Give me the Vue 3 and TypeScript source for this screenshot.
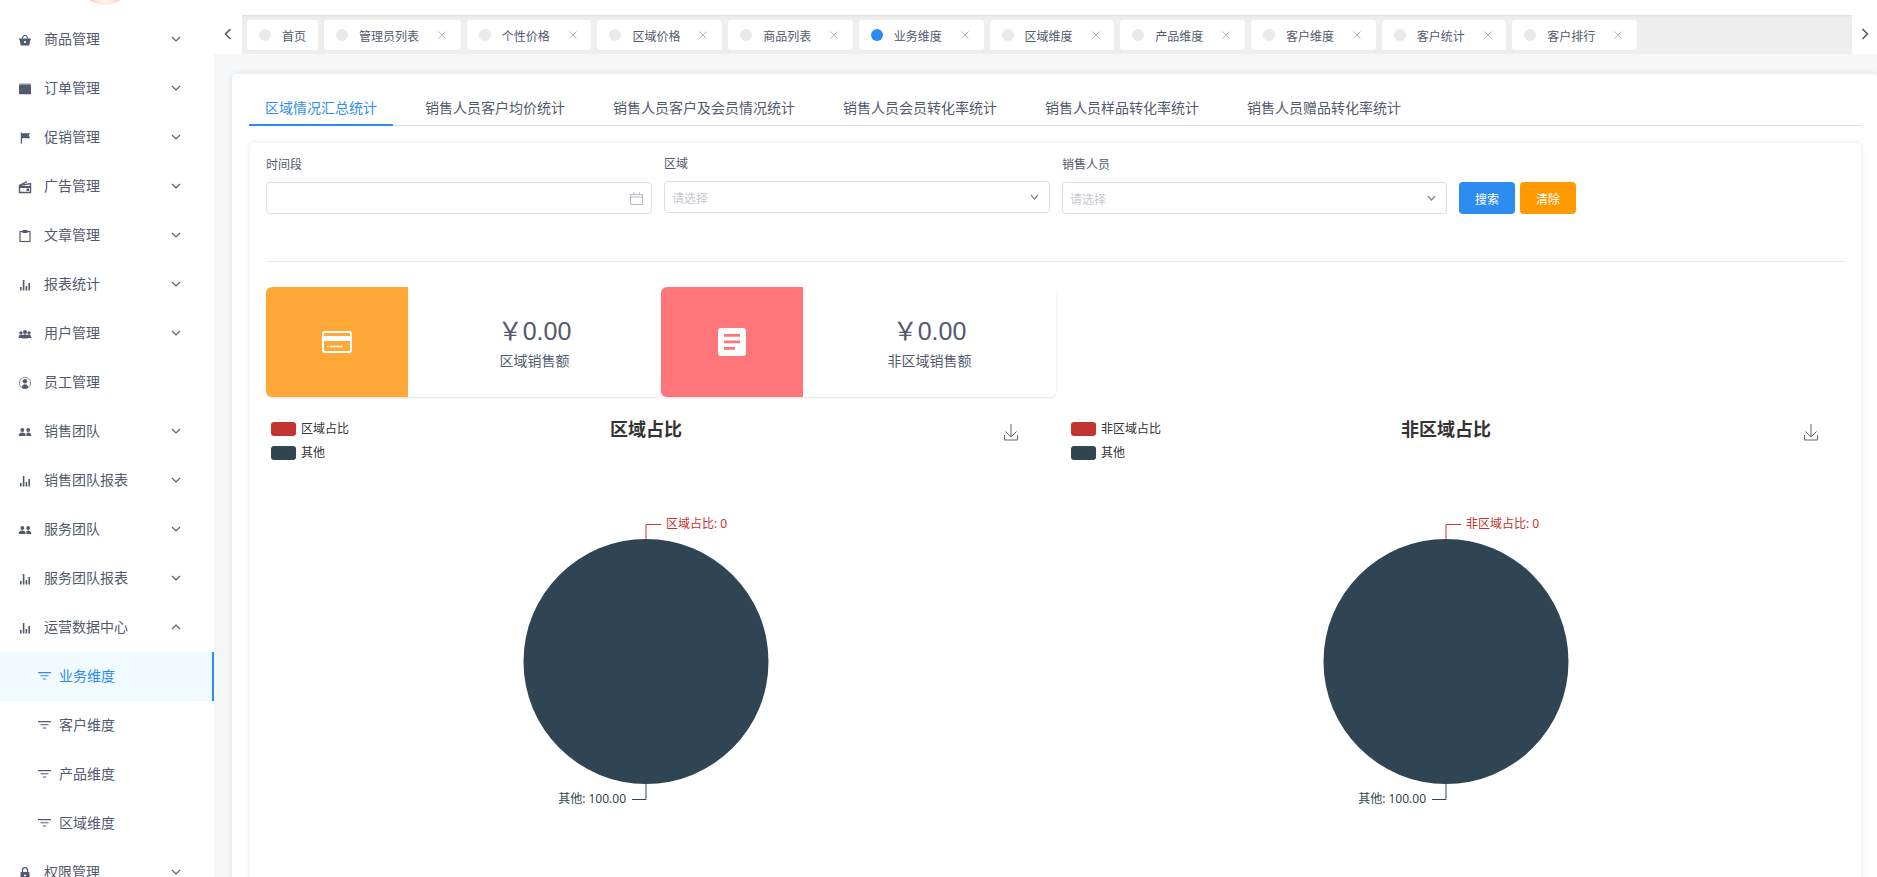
<script setup lang="ts">
type IconName = 'basket' | 'case' | 'flag' | 'radio' | 'clip' | 'bars' | 'users' | 'person' | 'team' | 'lock'

interface MenuItem {
  title: string
  icon: IconName
  arrow?: 'down' | 'up' | 'none'
}

const topMenus: MenuItem[] = [
  { title: '商品管理', icon: 'basket' },
  { title: '订单管理', icon: 'case' },
  { title: '促销管理', icon: 'flag' },
  { title: '广告管理', icon: 'radio' },
  { title: '文章管理', icon: 'clip' },
  { title: '报表统计', icon: 'bars' },
  { title: '用户管理', icon: 'users' },
  { title: '员工管理', icon: 'person', arrow: 'none' },
  { title: '销售团队', icon: 'team' },
  { title: '销售团队报表', icon: 'bars' },
  { title: '服务团队', icon: 'team' },
  { title: '服务团队报表', icon: 'bars' },
  { title: '运营数据中心', icon: 'bars', arrow: 'up' },
]

const subMenus = ['业务维度', '客户维度', '产品维度', '区域维度']

const tags = ['首页', '管理员列表', '个性价格', '区域价格', '商品列表', '业务维度', '区域维度', '产品维度', '客户维度', '客户统计', '客户排行']

const tabs = ['区域情况汇总统计', '销售人员客户均价统计', '销售人员客户及会员情况统计', '销售人员会员转化率统计', '销售人员样品转化率统计', '销售人员赠品转化率统计']

const charts = [
  { title: '区域占比', name: '区域占比' },
  { title: '非区域占比', name: '非区域占比' },
]
</script>

<template>
  <div class="layout">
    <aside class="sider">
      <div class="logo"><span class="logo-img"></span></div>
      <div v-for="m in topMenus" :key="m.title" class="menu-item">
        <svg class="menu-icon" width="14" height="14" viewBox="0 0 14 14">
          <g v-if="m.icon === 'basket'" fill="#515a6e">
            <path d="M1 5.5h12v1.2h-.6L11.2 12.5H2.8L1.6 6.7H1z" />
            <path d="M3.4 5.5 5.6 2h2.8l2.2 3.5H9.3L7.8 3.1H6.2L4.7 5.5z" />
            <circle cx="7" cy="9" r="1.1" fill="#fff" />
          </g>
          <g v-else-if="m.icon === 'case'">
            <path d="M1.5 1.600h11l.5 1.800H1z" fill="#8a90a0" />
            <rect x="1" y="3" width="12" height="9.200" rx=".5" fill="#515a6e" />
          </g>
          <path v-else-if="m.icon === 'flag'" d="M2.8 1.6h1.2v11H2.8zM4 2.200h8L10.800 4.600 12 7.200H4z" fill="#515a6e" />
          <g v-else-if="m.icon === 'radio'" fill="none" stroke="#515a6e">
            <path d="M1.500 5.500v7h11v-9z" stroke-width="1.400" />
            <path d="M1.800 5.400 9 1.600" stroke-width="1.200" />
            <path d="M2 6h10.500v2H2z" fill="#515a6e" stroke="none" />
            <rect x="8.500" y="8.500" width="2.500" height="2.500" fill="#515a6e" stroke="none" />
          </g>
          <g v-else-if="m.icon === 'clip'">
            <rect x="2" y="2.500" width="10" height="10" fill="none" stroke="#515a6e" stroke-width="1.200" />
            <rect x="4.500" y="1" width="5" height="3" fill="#515a6e" />
          </g>
          <g v-else-if="m.icon === 'bars'" fill="#515a6e">
            <rect x="2" y="9" width="1.600" height="3.500" />
            <rect x="4.800" y="2" width="1.600" height="10.500" />
            <rect x="7.600" y="8" width="1.600" height="4.500" />
            <rect x="10.400" y="5" width="1.600" height="7.500" />
          </g>
          <g v-else-if="m.icon === 'users'" fill="#515a6e">
            <circle cx="3" cy="6" r="1.700" />
            <circle cx="11" cy="6" r="1.700" />
            <circle cx="7" cy="5" r="2" />
            <path d="M.8 11V9.200q.6-1.400 2.200-1.400t2.200 1.400V11zM8.800 11V9.200q.6-1.400 2.200-1.400t2.200 1.400V11zM4.200 11.500V9q.8-1.800 2.800-1.800T9.800 9v2.500z" />
          </g>
          <g v-else-if="m.icon === 'person'">
            <circle cx="7" cy="7" r="5.600" fill="none" stroke="#8a90a0" stroke-width="1" />
            <circle cx="7" cy="5.200" r="2.300" fill="#515a6e" />
            <path d="M4 12q-.2-3.800 3-3.800T10 12q-3 1.200-6 0z" fill="#515a6e" />
          </g>
          <g v-else-if="m.icon === 'team'" fill="#515a6e">
            <circle cx="4.300" cy="5" r="1.900" />
            <circle cx="10.200" cy="5" r="1.900" />
            <path d="M.8 11V9.400Q1.600 7.600 4.300 7.600T7.600 9.400V11zM8.400 11V8q.8-.4 1.800-.4 2.300 0 3 1.800V11z" />
          </g>
        </svg>
        <span class="menu-title">{{ m.title }}</span>
        <svg v-if="m.arrow !== 'none'" class="menu-arrow" width="10" height="6" viewBox="0 0 10 6">
          <polyline :points="m.arrow === 'up' ? '1,5 5,1 9,5' : '1,1 5,5 9,1'" fill="none" stroke="#515a6e" stroke-width="1.100" />
        </svg>
      </div>
      <div v-for="(s, i) in subMenus" :key="s" class="sub-item" :class="{ active: i === 0 }">
        <svg class="sub-icon" width="13" height="8" viewBox="0 0 13 8">
          <path d="M0 .6h13M2.500 3.800h8M4.800 7h3.400" fill="none" stroke="currentColor" stroke-width="1.100" />
        </svg>
        <span class="sub-title">{{ s }}</span>
      </div>
      <div class="menu-item">
        <svg class="menu-icon" width="14" height="14" viewBox="0 0 14 14">
          <path d="M4.500 6V4.200a2.500 2.500 0 0 1 5 0V6" fill="none" stroke="#515a6e" stroke-width="1.300" />
          <rect x="2.500" y="6" width="9" height="7" rx="1" fill="#515a6e" />
          <circle cx="7" cy="9.500" r="1" fill="#fff" />
        </svg>
        <span class="menu-title">权限管理</span>
        <svg class="menu-arrow" width="10" height="6" viewBox="0 0 10 6">
          <polyline points="1,1 5,5 9,1" fill="none" stroke="#515a6e" stroke-width="1.100" />
        </svg>
      </div>
    </aside>

    <main class="main">
      <div class="header-top"></div>
      <div class="tags-nav">
        <div class="tag-btn left">
          <svg width="8" height="12" viewBox="0 0 8 12"><polyline points="6.500,1 1.500,6 6.500,11" fill="none" stroke="#515a6e" stroke-width="1.600" /></svg>
        </div>
        <div class="tag-list">
          <div v-for="(t, i) in tags" :key="t" class="tag">
            <span class="dot" :class="{ on: t === '业务维度' && i === 5 }"></span>
            <span class="tag-text">{{ t }}</span>
            <svg v-if="i > 0" class="tag-close" width="8" height="8" viewBox="0 0 8 8">
              <path d="M.5.5l7 7M7.500.5l-7 7" stroke="#b5b8be" stroke-width="1" />
            </svg>
          </div>
        </div>
        <div class="tag-btn right">
          <svg width="8" height="12" viewBox="0 0 8 12"><polyline points="1.500,1 6.500,6 1.500,11" fill="none" stroke="#515a6e" stroke-width="1.600" /></svg>
        </div>
      </div>

      <div class="content">
        <div class="page-card">
          <div class="tabs">
            <div v-for="(t, i) in tabs" :key="t" class="tab" :class="{ active: i === 0 }">{{ t }}</div>
          </div>

          <div class="panel">
            <div class="filter">
              <div class="field">
                <label>时间段</label>
                <div class="input">
                  <svg class="cal" width="13" height="13" viewBox="0 0 13 13">
                    <path d="M.5 2.500h12v10H.5zM.5 5h12M3.500.5v2M9.500.5v2" fill="none" stroke="#b4bac4" stroke-width="1" />
                  </svg>
                </div>
              </div>
              <div class="field raised">
                <label>区域</label>
                <div class="input">
                  <span class="placeholder">请选择</span>
                  <svg width="9" height="6" viewBox="0 0 9 6"><polyline points="1,1 4.500,5 8,1" fill="none" stroke="#808695" stroke-width="1.200" /></svg>
                </div>
              </div>
              <div class="field last">
                <label>销售人员</label>
                <div class="input">
                  <span class="placeholder">请选择</span>
                  <svg width="9" height="6" viewBox="0 0 9 6"><polyline points="1,1 4.500,5 8,1" fill="none" stroke="#808695" stroke-width="1.200" /></svg>
                </div>
              </div>
              <div class="actions">
                <button class="btn primary">搜索</button>
                <button class="btn warning">清除</button>
              </div>
            </div>

            <div class="divider"></div>

            <div class="stats">
              <div class="stat">
                <div class="stat-icon orange">
                  <svg width="30" height="22" viewBox="0 0 30 22">
                    <rect x="1" y="1" width="28" height="20" rx="2" fill="none" stroke="#fff" stroke-width="2" />
                    <rect x="1" y="5" width="28" height="5" fill="#fff" />
                    <path d="M5 15.500h1.500M8 15.500h13" stroke="#fff" stroke-width="1.500" />
                  </svg>
                </div>
                <div class="stat-body">
                  <div class="stat-value">￥0.00</div>
                  <div class="stat-label">区域销售额</div>
                </div>
              </div>
              <div class="stat">
                <div class="stat-icon red">
                  <svg width="28" height="28" viewBox="0 0 28 28">
                    <rect width="28" height="28" rx="3" fill="#fff" />
                    <path d="M6 6h16v2.800H6zM6 12.500h16v2.800H6zM6 19h11v2.800H6z" fill="#ff7579" />
                  </svg>
                </div>
                <div class="stat-body">
                  <div class="stat-value">￥0.00</div>
                  <div class="stat-label">非区域销售额</div>
                </div>
              </div>
            </div>

            <div class="charts">
              <svg v-for="c in charts" :key="c.title" class="chart" width="760" height="490" viewBox="0 0 760 490">
                <rect x="5" y="5" width="25" height="14" rx="3" fill="#c23531" />
                <text x="35" y="16" class="legend-text">{{ c.name }}</text>
                <rect x="5" y="29" width="25" height="14" rx="3" fill="#2f4554" />
                <text x="35" y="40" class="legend-text">其他</text>
                <text x="380" y="19" class="chart-title" text-anchor="middle">{{ c.title }}</text>
                <path d="M745 7v13M739.500 14.500l5.500 5.500 5.500-5.500M738.500 18v5h13v-5" fill="none" stroke="#666" stroke-width="1" />
                <circle cx="380" cy="244.500" r="122.500" fill="#2f4554" />
                <path d="M380 122V107.500H395" fill="none" stroke="#c23531" stroke-width="1" />
                <text x="400" y="111" class="pie-label" fill="#c23531">{{ c.name }}: 0</text>
                <path d="M380 367V382.500H366" fill="none" stroke="#2f4554" stroke-width="1" />
                <text x="360" y="386" class="pie-label" fill="#2f4554" text-anchor="end">其他: 100.00</text>
              </svg>
            </div>
          </div>
        </div>
      </div>
    </main>
  </div>
</template>

<style>
html,
body {
  margin: 0;
  height: 100%;
  overflow: hidden;
}
</style>

<style scoped>
.layout {
  display: flex;
  height: 100vh;
  overflow: hidden;
  font-family: "Liberation Sans", "Noto Sans CJK SC", sans-serif;
  font-size: 12px;
  color: #515a6e;
}

.sider {
  flex: 0 0 214px;
  background: #fff;
  overflow: hidden;
}

.logo {
  height: 15px;
  overflow: hidden;
  display: flex;
  justify-content: center;
}

.logo-img {
  display: block;
  width: 50px;
  height: 50px;
  margin-top: -45px;
  margin-left: -4px;
  border-radius: 50%;
  background: radial-gradient(circle at 50% 88%, #fff 0, #ffd9c8 22%, #f4635c 55%);
  flex: none;
}

.menu-item {
  display: flex;
  align-items: center;
  height: 49px;
  padding-left: 18px;
  font-size: 14px;
}

.menu-icon {
  flex: none;
}

.menu-title {
  margin-left: 12px;
  margin-bottom: 4px;
  flex: 1;
}

.menu-arrow {
  margin-right: 33px;
  margin-bottom: 1px;
}

.sub-item {
  display: flex;
  align-items: center;
  height: 49px;
  padding-left: 38px;
  font-size: 14px;
  box-sizing: border-box;
}

.sub-icon {
  margin-right: 8px;
  margin-bottom: 1px;
  flex: none;
}

.sub-title {
  margin-bottom: 4px;
}

.sub-item.active {
  background: #f0faff;
  color: #2d8cf0;
  border-right: 2px solid #2d8cf0;
}

.main {
  flex: 1;
  min-width: 0;
  background: #f5f7f9;
  display: flex;
  flex-direction: column;
}

.header-top {
  height: 15px;
  background: #fff;
  flex: none;
}

.tags-nav {
  flex: none;
  height: 39px;
  display: flex;
  background: #eee;
  box-shadow: inset 0 2px 2px -1px rgba(0, 0, 0, 0.08);
}

.tag-btn {
  flex: none;
  background: #fff;
  display: flex;
  align-items: center;
  justify-content: center;
  padding-bottom: 2px;
  box-sizing: border-box;
}

.tag-btn.left {
  width: 28px;
}

.tag-btn.right {
  width: 25px;
}

.tag-list {
  flex: 1;
  display: flex;
  gap: 6px;
  padding: 5px 0 0 5px;
}

.tag {
  height: 30px;
  display: flex;
  align-items: center;
  padding: 0 12px;
  background: #fff;
  border-radius: 3px;
  box-sizing: border-box;
  white-space: nowrap;
}

.dot {
  width: 12px;
  height: 12px;
  border-radius: 50%;
  background: #e8eaec;
  margin-right: 11px;
}

.dot.on {
  background: #2d8cf0;
}

.tag-close {
  margin-left: 19px;
  margin-right: 2.700px;
}

.content {
  flex: 1;
  min-height: 0;
  padding: 20px 0 0 18px;
  overflow: hidden;
}

.page-card {
  background: #fff;
  border-radius: 4px;
  box-shadow: 0 0 6px rgba(0, 0, 0, 0.1);
  padding: 16px 15px 0 17px;
  height: 1000px;
}

.tabs {
  display: flex;
  border-bottom: 1px solid #dcdee2;
  height: 36px;
  box-sizing: border-box;
}

.tab {
  padding: 8px 16px 0;
  margin-right: 16px;
  font-size: 14px;
  line-height: 20px;
  height: 36px;
  box-sizing: border-box;
  white-space: nowrap;
}

.tab.active {
  color: #2d8cf0;
  border-bottom: 2px solid #2d8cf0;
}

.panel {
  margin: 17px 1px 0;
  background: #fff;
  border-radius: 4px;
  box-shadow: 0 0 5px rgba(0, 0, 0, 0.12);
  padding: 16px 16px 0;
  height: 900px;
}

.filter {
  display: flex;
  align-items: flex-start;
  gap: 12.500px;
  height: 102px;
}

.field {
  width: 385.500px;
}

.field.last {
  width: 385px;
}

.field.raised {
  margin-top: -1px;
}

.field label {
  display: block;
  line-height: 12px;
  margin-bottom: 11px;
}

.input {
  height: 32px;
  box-sizing: border-box;
  border: 1px solid #dcdee2;
  border-radius: 4px;
  display: flex;
  align-items: center;
  justify-content: space-between;
  padding: 0 10px 0 7px;
}

.placeholder {
  color: #c5c8ce;
}

.cal {
  margin-left: auto;
  margin-right: -2px;
}

.actions {
  display: flex;
  gap: 5px;
  margin-top: 23px;
  margin-left: -0.500px;
}

.btn {
  width: 56px;
  height: 32px;
  border: 0;
  border-radius: 4px;
  color: #fff;
  font: inherit;
  padding: 0;
}

.btn.primary {
  background: #2d8cf0;
}

.btn.warning {
  background: #ff9900;
}

.divider {
  height: 1px;
  background: #e8eaec;
}

.stats {
  display: flex;
  margin-top: 25px;
}

.stat {
  width: 395px;
  height: 110px;
  display: flex;
  border-radius: 6px;
  overflow: hidden;
  box-shadow: 0 1px 2px rgba(0, 0, 0, 0.12);
}

.stat-icon {
  flex: 0 0 142px;
  display: flex;
  align-items: center;
  justify-content: center;
}

.stat-icon.orange {
  background: #ffa838;
}

.stat-icon.red {
  background: #ff7579;
}

.stat-body {
  flex: 1;
  text-align: center;
  padding-top: 29px;
}

.stat-value {
  font-size: 25px;
  line-height: 30px;
  color: #515a6e;
}

.stat-label {
  font-size: 14px;
  line-height: 20px;
  margin-top: 5px;
}

.charts {
  display: flex;
  gap: 40px;
  margin-top: 20px;
}

.chart {
  flex: none;
}

.legend-text {
  font-size: 12px;
  fill: #333;
}

.chart-title {
  font-size: 18px;
  font-weight: 700;
  fill: #333;
}

.pie-label {
  font-size: 12px;
  font-family: "Noto Sans", "Noto Sans CJK SC", sans-serif;
}
</style>
